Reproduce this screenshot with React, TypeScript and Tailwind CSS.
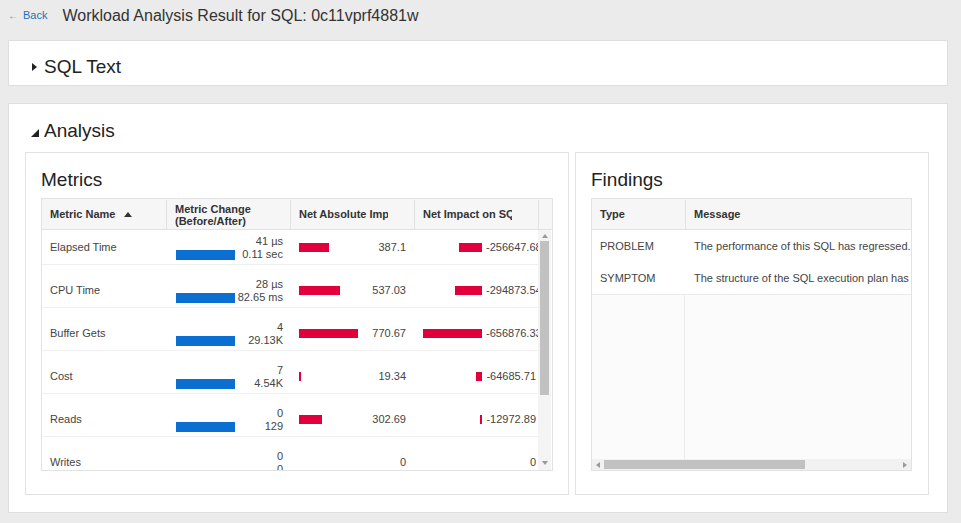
import React from "react";

type Metric = {
    name: string;
    before: string;
    after: string;
    change: number;
    abs: string;
    absW: number;
    net: string;
    netW: number;
};

const METRICS: Metric[] = [
    { name: "Elapsed Time", before: "41 µs", after: "0.11 sec", change: 59, abs: "387.1", absW: 30, net: "-256647.68", netW: 23 },
    { name: "CPU Time", before: "28 µs", after: "82.65 ms", change: 59, abs: "537.03", absW: 41, net: "-294873.54", netW: 27 },
    { name: "Buffer Gets", before: "4", after: "29.13K", change: 59, abs: "770.67", absW: 59, net: "-656876.33", netW: 59 },
    { name: "Cost", before: "7", after: "4.54K", change: 59, abs: "19.34", absW: 2, net: "-64685.71", netW: 6 },
    { name: "Reads", before: "0", after: "129", change: 59, abs: "302.69", absW: 23, net: "-12972.89", netW: 2 },
    { name: "Writes", before: "0", after: "0", change: 0, abs: "0", absW: 0, net: "0", netW: 0 },
];

const FINDINGS = [
    { type: "PROBLEM", message: "The performance of this SQL has regressed." },
    { type: "SYMPTOM", message: "The structure of the SQL execution plan has changed." },
];

function Tri({ dir }: { dir: "up" | "down" | "left" | "right" }) {
    const pts = {
        up: "0,4 3,0 6,4",
        down: "0,0 6,0 3,4",
        left: "4,0 4,6 0,3",
        right: "0,0 4,3 0,6",
    }[dir];
    const w = dir === "up" || dir === "down" ? 6 : 4;
    const h = dir === "up" || dir === "down" ? 4 : 6;
    return (
        <svg width={w} height={h} viewBox={`0 0 ${w} ${h}`}>
            <polygon points={pts} fill="#9a9a9a" />
        </svg>
    );
}

function MetricsTable() {
    return (
        <div className="flex h-[273px] flex-col border border-[#e2e2e2]">
            {/* header */}
            <div className="flex h-[31px] shrink-0 border-b border-[#e2e2e2] bg-[#f6f6f6] pt-[1px] text-[11px] font-bold text-[#333]">
                <div className="flex w-[124px] items-center gap-[9px] pl-2">
                    Metric Name
                    <svg width="8" height="5" viewBox="0 0 8 5">
                        <polygon points="0,5 4,0 8,5" fill="#333" />
                    </svg>
                </div>
                <div className="flex w-[124px] items-center border-l border-[#e2e2e2] pl-2 leading-[12px]">
                    Metric Change
                    <br />
                    (Before/After)
                </div>
                <div className="flex w-[124px] items-center border-l border-[#e2e2e2] pl-2 pr-[26px]">
                    <span className="block overflow-hidden whitespace-nowrap">Net Absolute Impact</span>
                </div>
                <div className="flex w-[124px] items-center border-l border-[#e2e2e2] pl-2 pr-[26px]">
                    <span className="block overflow-hidden whitespace-nowrap">Net Impact on SQL</span>
                </div>
                <div className="flex-1 border-l border-[#e2e2e2]" />
            </div>

            {/* body */}
            <div className="flex min-h-0 flex-1">
                <div className="w-[496px] overflow-hidden bg-white text-[11px] text-[#444]">
                    {METRICS.map((m) => (
                        <div key={m.name} className="mb-2 flex h-[35px] border-b border-[#efefef]">
                            <div className="flex w-[124px] shrink-0 items-center pl-2">{m.name}</div>
                            <div className="flex w-[124px] shrink-0 items-end justify-between pb-[3px] pl-[10px] pr-[7px]">
                                <div
                                    className="mb-[1px] h-[10px] bg-[#0a6fd0]"
                                    style={{ width: m.change }}
                                />
                                <div className="text-right leading-[13px]">
                                    {m.before}
                                    <br />
                                    {m.after}
                                </div>
                            </div>
                            <div className="flex w-[124px] shrink-0 items-center justify-between pl-[9px] pr-2">
                                <div className="h-[9px] bg-[#e2003c]" style={{ width: m.absW }} />
                                <span>{m.abs}</span>
                            </div>
                            <div className="flex w-[124px] shrink-0 items-center overflow-hidden pl-[9px]">
                                <div className="flex w-[59px] shrink-0 justify-end">
                                    <div className="h-[9px] bg-[#e2003c]" style={{ width: m.netW }} />
                                </div>
                                <span className="ml-[4px] w-[50px] shrink-0 whitespace-nowrap text-right">
                                    {m.net}
                                </span>
                            </div>
                        </div>
                    ))}
                </div>
                {/* vertical scrollbar */}
                <div className="flex w-[13px] flex-col items-center bg-[#f4f4f4]">
                    <div className="flex h-[11px] items-center">
                        <Tri dir="up" />
                    </div>
                    <div className="h-[154px] w-[9px] bg-[#c1c1c1]" />
                    <div className="flex-1" />
                    <div className="flex h-[14px] items-center">
                        <Tri dir="down" />
                    </div>
                </div>
            </div>
        </div>
    );
}

function FindingsTable() {
    return (
        <div className="flex h-[273px] flex-col border border-[#e2e2e2] bg-[#fbfbfb]">
            <div className="flex h-[31px] shrink-0 border-b border-[#e2e2e2] bg-[#f6f6f6] pt-[1px] text-[11px] font-bold text-[#333]">
                <div className="flex w-[93px] shrink-0 items-center pl-2">Type</div>
                <div className="flex flex-1 items-center border-l border-[#e2e2e2] pl-2">Message</div>
            </div>
            <div className="flex min-h-0 flex-1 flex-col overflow-hidden">
                <div className="border-b border-[#ebebeb] bg-white text-[11px] text-[#444]">
                    {FINDINGS.map((f) => (
                        <div key={f.type} className="flex h-[32px] items-center">
                            <div className="w-[93px] shrink-0 pl-2">{f.type}</div>
                            <div className="whitespace-nowrap pl-[9px]">{f.message}</div>
                        </div>
                    ))}
                </div>
                <div className="flex flex-1">
                    <div className="w-[93px] border-r border-[#ebebeb]" />
                </div>
            </div>
            {/* horizontal scrollbar */}
            <div className="flex h-[11px] shrink-0 items-center bg-[#f1f1f1]">
                <div className="flex w-[12px] justify-center">
                    <Tri dir="left" />
                </div>
                <div className="h-[9px] w-[201px] bg-[#c1c1c1]" />
                <div className="flex-1" />
                <div className="flex w-[12px] justify-center">
                    <Tri dir="right" />
                </div>
            </div>
        </div>
    );
}

export default function App() {
    return (
        <div className="min-h-[523px] bg-[#ebebeb] pl-2 pr-[13px] font-['Liberation_Sans',Arial,sans-serif] text-[#333]">
            {/* top bar */}
            <div className="flex h-[31px] items-center">
                <a href="#" className="flex items-center gap-[5px] text-[11px] text-[#1f6fbf]">
                    <span className="text-[10px] text-[#6d8fb3]">←</span>
                    Back
                </a>
                <h1 className="ml-[15px] text-[16px] text-[#333]">
                    Workload Analysis Result for SQL: 0c11vprf4881w
                </h1>
            </div>

            {/* SQL Text — collapsed */}
            <section className="mt-[9px] border border-[#dedede] bg-white pb-[7px] pl-[23px] pt-[15px]">
                <h2 className="flex items-center gap-[7px] text-[19px] leading-[22px] text-[#222]">
                    <svg width="5" height="8" viewBox="0 0 5 8">
                        <polygon points="0,0 5,4 0,8" fill="#222" />
                    </svg>
                    SQL Text
                </h2>
            </section>

            {/* Analysis — expanded */}
            <section className="mt-[17px] border border-[#dedede] bg-white pb-[17px] pl-4 pr-[19px] pt-4">
                <h2 className="flex items-end gap-[5px] pl-[6px] text-[19px] leading-[22px] text-[#222]">
                    <svg width="8" height="8" viewBox="0 0 8 8" className="mb-[5px]">
                        <polygon points="8,0 8,8 0,8" fill="#222" />
                    </svg>
                    Analysis
                </h2>

                <div className="mt-[10px] grid grid-cols-[544px_354px] gap-[6px]">
                    <div className="border border-[#e2e2e2] px-[15px] pb-[23px] pt-4">
                        <h3 className="text-[19px] leading-[22px] text-[#222]">Metrics</h3>
                        <div className="mt-[7px]">
                            <MetricsTable />
                        </div>
                    </div>
                    <div className="border border-[#e2e2e2] pb-[23px] pl-[15px] pr-4 pt-4">
                        <h3 className="text-[19px] leading-[22px] text-[#222]">Findings</h3>
                        <div className="mt-[7px]">
                            <FindingsTable />
                        </div>
                    </div>
                </div>
            </section>
        </div>
    );
}
